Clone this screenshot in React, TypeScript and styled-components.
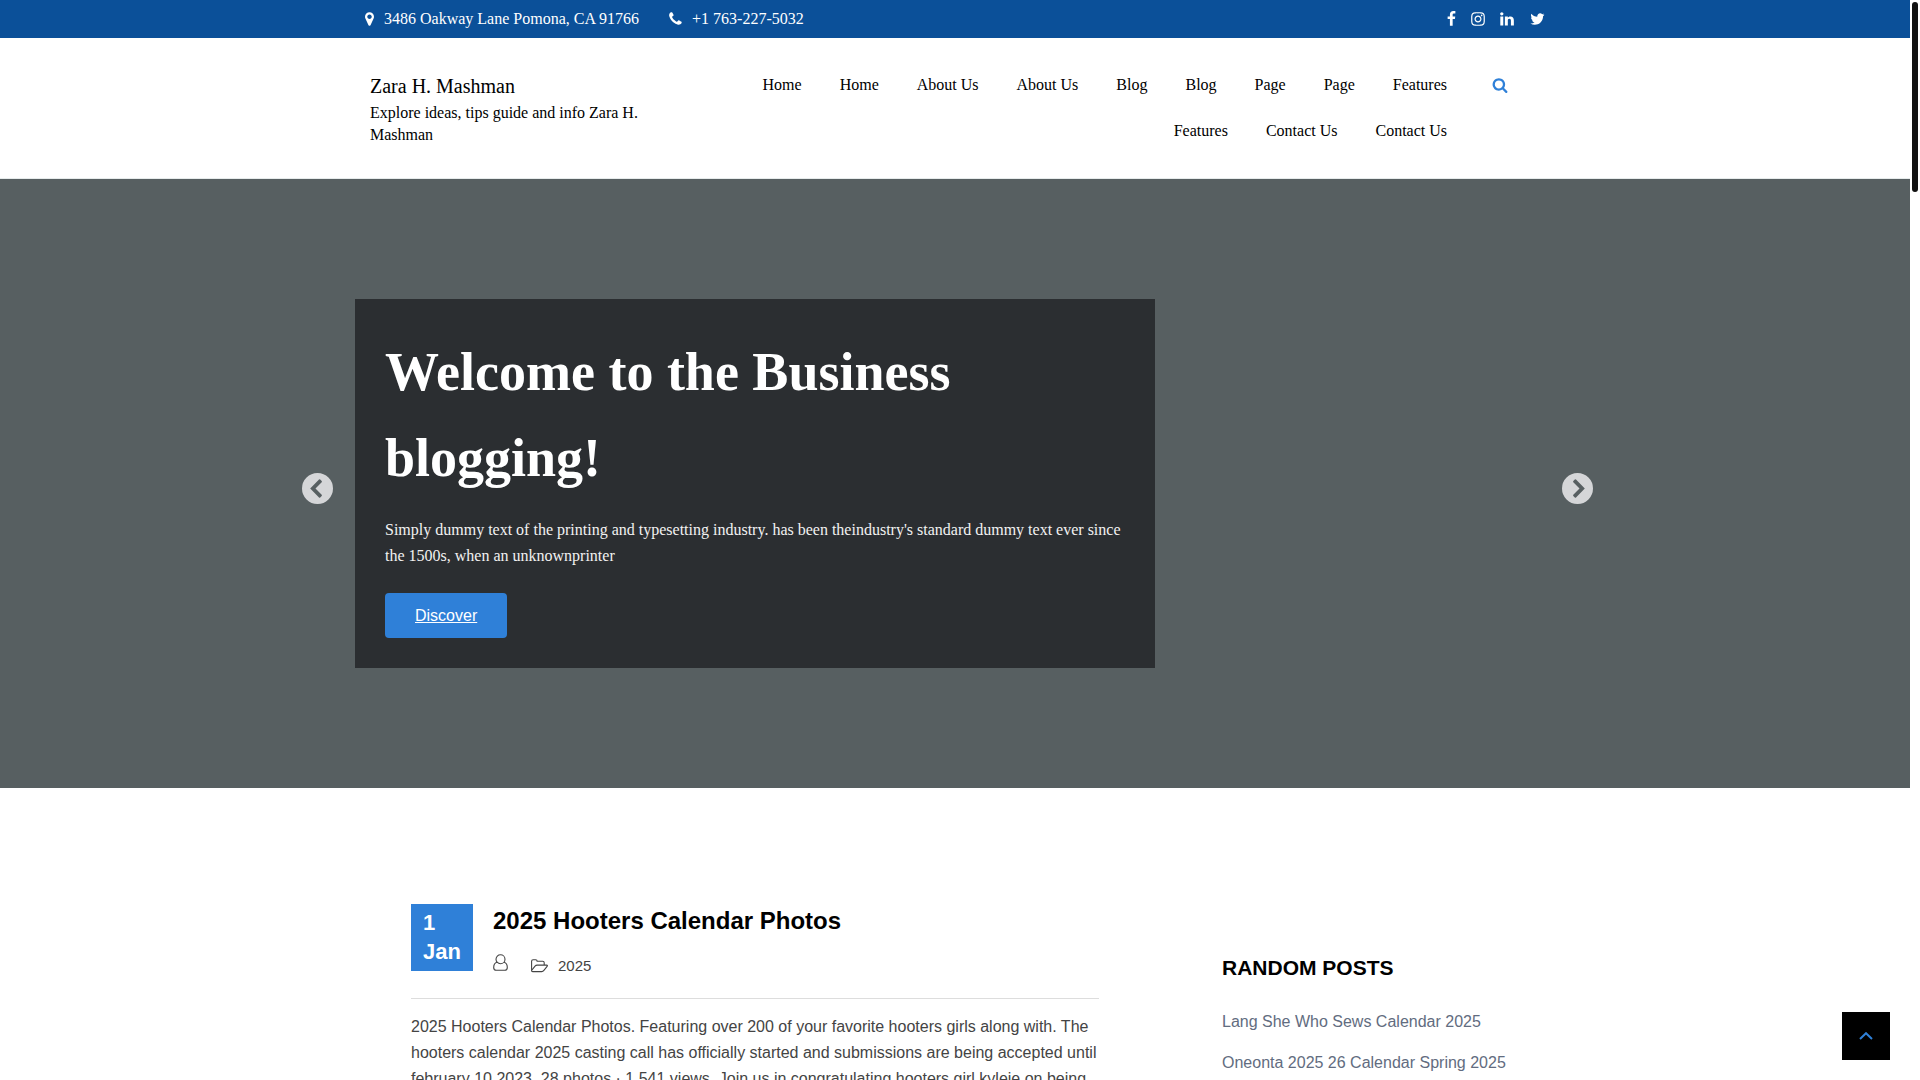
import React from "react";
import styled, { createGlobalStyle } from "styled-components";

const serif = `"Liberation Serif", "Times New Roman", serif`;
const sans = `"Liberation Sans", Arial, sans-serif`;
const blue = "#2f80d8";

const GlobalStyle = createGlobalStyle`
  *, *::before, *::after { box-sizing: border-box; }
  body { margin: 0; background: #fff; color: #444; font: 16px/26px ${sans}; }
  h1, h2, h3, p, ul { margin: 0; padding: 0; }
  ul { list-style: none; }
  a { color: inherit; text-decoration: none; }
  button { border: 0; padding: 0; background: none; cursor: pointer; }
  svg { display: block; flex: none; }
`;

const Page = styled.div`
  height: 100vh;
  overflow: hidden;
  padding-right: 10px;
`;

const Container = styled.div`
  position: relative;
  width: 100%;
  max-width: 1200px;
  margin: 0 auto;
`;

const TopBar = styled.div`
  background: #0b5099;
  color: #fff;
  font-family: ${serif};
`;

const TopBarInner = styled(Container)`
  display: flex;
  justify-content: space-between;
  align-items: center;
  height: 38px;
  padding: 0 10px;
`;

const Contacts = styled.div`
  display: flex;
  gap: 30px;
`;

const Contact = styled.span`
  display: flex;
  align-items: center;
  gap: 10px;
`;

const Socials = styled.div`
  display: flex;
  align-items: center;
  gap: 15px;
`;

const Header = styled.header`
  border-bottom: 1px solid #e6ebeb;
  color: #000;
  font-family: ${serif};
`;

const HeaderInner = styled(Container)`
  display: flex;
  align-items: flex-start;
  justify-content: space-between;
  padding: 24px 47px 24px 15px;
`;

const Brand = styled.div`
  width: 285px;
  padding-top: 12px;
  line-height: 22px;
`;

const BrandName = styled.a`
  display: block;
  margin-bottom: 4px;
  font-size: 20px;
  line-height: 24px;
`;

const Nav = styled.nav`
  flex: 1;
  max-width: 720px;
  margin: 0 45px 0 auto;
`;

const Menu = styled.ul`
  display: flex;
  flex-wrap: wrap;
  justify-content: flex-end;
  column-gap: 38px;
  line-height: 46px;
`;

const SearchButton = styled.button`
  display: flex;
  align-items: center;
  height: 46px;
  color: ${blue};
`;

const Hero = styled.section`
  padding: 120px 0;
  background: #575f61;
`;

const Slide = styled.div`
  max-width: 800px;
  padding: 30px;
  background: #2b2e31;
  color: #fff;
  font-family: ${serif};
`;

const SlideTitle = styled.h1`
  margin-bottom: 16px;
  font-size: 54px;
  line-height: 86px;
`;

const SlideText = styled.p`
  margin-bottom: 24px;
  color: #f2f2f2;
`;

const Discover = styled.a`
  display: inline-block;
  vertical-align: top;
  padding: 0 30px;
  border-radius: 4px;
  background: ${blue};
  font-family: ${sans};
  line-height: 45px;
  text-decoration: underline;
`;

const Arrow = styled.button<{ $side: "left" | "right" }>`
  position: absolute;
  top: 50%;
  margin-top: -11px;
  ${(p) => (p.$side === "left" ? "left: -53px;" : "right: -38px;")}
  color: #d5d6d8;
`;

const Content = styled(Container)`
  display: grid;
  grid-template-columns: 2fr 1fr;
  padding-top: 116px;
`;

const Post = styled.article`
  padding: 0 56px;
`;

const PostHead = styled.header`
  display: flex;
  align-items: flex-start;
  gap: 20px;
  padding-bottom: 20px;
  border-bottom: 1px solid #ddd;
`;

const PostDate = styled.time`
  width: 62px;
  padding: 4px 12px 5px;
  background: ${blue};
  color: #fff;
  font-size: 22px;
  font-weight: bold;
  line-height: 29px;
`;

const PostTitle = styled.h2`
  color: #000;
  font-size: 24px;
  line-height: 34px;
`;

const PostMeta = styled.div`
  display: flex;
  align-items: flex-start;
  gap: 23px;
  margin-top: 16px;
  font-size: 15px;
`;

const MetaLink = styled.a`
  display: flex;
  align-items: center;
  gap: 10px;
  line-height: 24px;
`;

const PostBody = styled.p`
  padding-top: 15px;
`;

const Sidebar = styled.aside`
  padding: 51px 0 0 67px;
`;

const SidebarTitle = styled.h3`
  margin-bottom: 28px;
  color: #000;
  font-size: 21px;
  line-height: 26px;
`;

const PostList = styled.ul`
  display: grid;
  gap: 15px;
  color: #626c80;
`;

const ToTop = styled.button`
  position: fixed;
  right: 30px;
  bottom: 20px;
  display: grid;
  place-items: center;
  width: 48px;
  height: 48px;
  background: #000;
  color: ${blue};
`;

const ScrollThumb = styled.div`
  position: fixed;
  top: 2px;
  right: 2px;
  width: 6px;
  height: 190px;
  border-radius: 3px;
  background: #111;
`;

type GlyphProps = { d: string; left?: number; units?: number; width: number };

/* Glyphs share a 1792-unit em, drawn at 16px and trimmed to their own width. */
const Glyph = ({ d, left = 0, units = 1792, width }: GlyphProps) => (
  <svg width={width} height={16} viewBox={`${left} 0 ${units} 1792`} fill="currentColor" aria-hidden="true">
    <path d={d} />
  </svg>
);

const icons = {
  marker:
    "M1152 640q0-106-75-181t-181-75-181 75-75 181 75 181 181 75 181-75 75-181zm256 0q0 109-33 179l-364 774q-16 33-47.5 52t-67.5 19-67.5-19-46.5-52l-365-774q-33-70-33-179 0-212 150-362t362-150 362 150 150 362z",
  phone:
    "M1600 1240q0 27-10 70.5t-21 68.5q-21 50-122 106-94 51-186 51-27 0-53-3.5t-57.5-12.5-47-14.5-55.5-20.5-49-18q-98-35-175-83-127-79-264-216t-216-264q-48-77-83-175-3-9-18-49t-20.5-55.5-14.5-47-12.5-57.5-3.5-53q0-92 51-186 56-101 106-122 25-11 68.5-21t70.5-10q14 0 21 3 18 6 53 76 11 19 30 54t35 63.5 31 53.5q3 4 17.5 25t21.5 35.5 7 28.5q0 20-28.5 50t-62 55-62 53-28.5 46q0 9 5 22.5t8.5 20.5 14 24 11.5 19q76 137 174 235t235 174q2 1 19 11.5t24 14 20.5 8.5 22.5 5q18 0 46-28.5t53-62 55-62 50-28.5q14 0 28.5 7t35.5 21.5 25 17.5q25 15 53.5 31t63.5 35 54 30q70 35 76 53 3 7 3 21z",
  facebook:
    "M1343 12v264h-157q-86 0-116 36t-30 108v189h293l-39 296h-254v759h-306v-759h-255v-296h255v-218q0-186 104-288.5t277-102.5q147 0 228 12z",
  instagram:
    "M1152 896q0-106-75-181t-181-75-181 75-75 181 75 181 181 75 181-75 75-181zm138 0q0 164-115 279t-279 115-279-115-115-279 115-279 279-115 279 115 115 279zm108-410q0 38-27 65t-65 27-65-27-27-65 27-65 65-27 65 27 27 65zm-502-220q-7 0-76.5-.5t-105.5 0-96.5 3-103 10-71.5 18.5q-50 20-88 58t-58 88q-11 29-18.5 71.5t-10 103-3 96.5 0 105.5.5 76.5-.5 76.5 0 105.5 3 96.5 10 103 18.5 71.5q20 50 58 88t88 58q29 11 71.5 18.5t103 10 96.5 3 105.5 0 76.5-.5 76.5.5 105.5 0 96.5-3 103-10 71.5-18.5q50-20 88-58t58-88q11-29 18.5-71.5t10-103 3-96.5 0-105.5-.5-76.5.5-76.5 0-105.5-3-96.5-10-103-18.5-71.5q-20-50-58-88t-88-58q-29-11-71.5-18.5t-103-10-96.5-3-105.5 0-76.5.5zm768 630q0 229-5 317-10 208-124 322t-322 124q-88 5-317 5t-317-5q-208-10-322-124t-124-322q-5-88-5-317t5-317q10-208 124-322t322-124q88-5 317-5t317 5q208 10 322 124t124 322q5 88 5 317z",
  linkedin:
    "M477 625v991h-330v-991h330zm21-306q1 73-50.5 122t-135.5 49h-2q-82 0-132-49t-50-122q0-74 51.5-122.5t134.5-48.5 133 48.5 51 122.5zm1166 729v568h-329v-530q0-105-40.5-164.5t-126.5-59.5q-63 0-105.5 34.5t-63.5 85.5q-11 30-11 81v553h-329q2-399 2-647t-1-296l-1-48h329v144h-2q20-32 41-56t56.5-52 87-43.5 114.5-15.5q171 0 275 113.5t104 332.5z",
  twitter:
    "M1684 408q-67 98-162 167 1 14 1 42 0 130-38 259.5t-115.5 248.5-184.5 210.5-258 146-323 54.5q-271 0-496-145 35 4 78 4 225 0 401-138-105-2-188-64.5t-114-159.5q33 5 61 5 43 0 85-11-112-23-185.5-111.5t-73.5-205.5v-4q68 38 146 41-66-44-105-115t-39-154q0-88 44-163 121 149 294.5 238.5t371.5 99.5q-8-38-8-74 0-134 94.5-228.5t228.5-94.5q140 0 236 102 109-21 205-78-37 115-142 178 93-10 186-50z",
  search:
    "M1216 832q0-185-131.5-316.5t-316.5-131.5-316.5 131.5-131.5 316.5 131.5 316.5 316.5 131.5 316.5-131.5 131.5-316.5zm512 832q0 52-38 90t-90 38q-54 0-90-38l-343-342q-179 124-399 124-143 0-273.5-55.5t-225-150-150-225-55.5-273.5 55.5-273.5 150-225 225-150 273.5-55.5 273.5 55.5 225 150 150 225 55.5 273.5q0 220-124 399l343 343q37 37 37 90z",
};

const CircleArrow = ({ flip = false }: { flip?: boolean }) => (
  <svg width="31" height="31" viewBox="0 0 31 31" fill="currentColor" aria-hidden="true">
    <path
      transform={flip ? "matrix(-1 0 0 1 31 0)" : undefined}
      fillRule="evenodd"
      d="M15.5 0a15.5 15.5 0 1 0 0 31a15.5 15.5 0 1 0 0-31zM8.2 15.5L17 6.6Q17.6 6 18.2 6.6L19.7 8.1Q20.2 8.7 19.7 9.3L13.5 15.5L19.7 21.7Q20.2 22.3 19.7 22.9L18.2 24.4Q17.6 25 17 24.4Z"
    />
  </svg>
);

const UserIcon = () => (
  <svg width="15" height="17" viewBox="0 0 15 17" fill="none" stroke="currentColor" strokeWidth="1.1" aria-hidden="true">
    <circle cx="7.5" cy="5.3" r="4.5" />
    <path d="M4 8.2C1.6 8.8 .7 11 .7 13.4C.7 15 1.7 16.2 3.3 16.2H11.7C13.3 16.2 14.3 15 14.3 13.4C14.3 11 13.4 8.8 11 8.2" />
  </svg>
);

const FolderIcon = () => (
  <svg width="17" height="14" viewBox="0 0 17 14" fill="none" stroke="currentColor" strokeWidth="1.1" strokeLinejoin="round" aria-hidden="true">
    <path d="M.6 11.5V2.2Q.6 .7 2.1 .7H4.6Q6.1 .7 6.1 2.2H11.7Q13.2 2.2 13.2 3.7V6.1M.6 11.5L4 7.2Q4.9 6.1 6.2 6.1H15.6Q17 6.1 16.1 7.3L12.9 11.4Q12 12.6 10.7 12.6H1.7Q.6 12.6 .6 11.5Z" />
  </svg>
);

const menu = [
  "Home", "Home", "About Us", "About Us", "Blog", "Blog",
  "Page", "Page", "Features", "Features", "Contact Us", "Contact Us",
];

const socials = [
  { name: "Facebook", d: icons.facebook, left: 407, units: 1008, width: 9 },
  { name: "Instagram", d: icons.instagram, left: 112, units: 1568, width: 14 },
  { name: "LinkedIn", d: icons.linkedin, left: 112, units: 1680, width: 15 },
  { name: "Twitter", d: icons.twitter, left: 64, units: 1680, width: 15 },
];

const randomPosts = [
  "Lang She Who Sews Calendar 2025",
  "Oneonta 2025 26 Calendar Spring 2025",
];

export default function App() {
  return (
    <Page>
      <GlobalStyle />
      <TopBar>
        <TopBarInner>
          <Contacts>
            <Contact>
              <Glyph d={icons.marker} left={384} units={1024} width={9} />
              3486 Oakway Lane Pomona, CA 91766
            </Contact>
            <Contact>
              <Glyph d={icons.phone} left={176} units={1456} width={13} />
              +1 763-227-5032
            </Contact>
          </Contacts>
          <Socials>
            {socials.map(({ name, ...glyph }) => (
              <a key={name} href="#" aria-label={name}>
                <Glyph {...glyph} />
              </a>
            ))}
          </Socials>
        </TopBarInner>
      </TopBar>

      <Header>
        <HeaderInner>
          <Brand>
            <BrandName href="#">Zara H. Mashman</BrandName>
            <p>Explore ideas, tips guide and info Zara H. Mashman</p>
          </Brand>
          <Nav>
            <Menu>
              {menu.map((label, i) => (
                <li key={i}>
                  <a href="#">{label}</a>
                </li>
              ))}
            </Menu>
          </Nav>
          <SearchButton aria-label="Search">
            <Glyph d={icons.search} width={16} />
          </SearchButton>
        </HeaderInner>
      </Header>

      <Hero>
        <Container>
          <Arrow $side="left" aria-label="Previous">
            <CircleArrow />
          </Arrow>
          <Slide>
            <SlideTitle>Welcome to the Business blogging!</SlideTitle>
            <SlideText>
              Simply dummy text of the printing and typesetting industry. has been theindustry's standard
              dummy text ever since the 1500s, when an unknownprinter
            </SlideText>
            <Discover href="#">Discover</Discover>
          </Slide>
          <Arrow $side="right" aria-label="Next">
            <CircleArrow flip />
          </Arrow>
        </Container>
      </Hero>

      <Content as="main">
        <Post>
          <PostHead>
            <PostDate>1 Jan</PostDate>
            <div>
              <PostTitle>
                <a href="#">2025 Hooters Calendar Photos</a>
              </PostTitle>
              <PostMeta>
                <a href="#" aria-label="Author">
                  <UserIcon />
                </a>
                <MetaLink href="#">
                  <FolderIcon />
                  2025
                </MetaLink>
              </PostMeta>
            </div>
          </PostHead>
          <PostBody>
            2025 Hooters Calendar Photos. Featuring over 200 of your favorite hooters girls along with. The
            hooters calendar 2025 casting call has officially started and submissions are being accepted
            until february 10 2023. 28 photos · 1,541 views. Join us in congratulating hooters girl kyleie on
            being
          </PostBody>
        </Post>
        <Sidebar>
          <SidebarTitle>RANDOM POSTS</SidebarTitle>
          <PostList>
            {randomPosts.map((title) => (
              <li key={title}>
                <a href="#">{title}</a>
              </li>
            ))}
          </PostList>
        </Sidebar>
      </Content>

      <ToTop aria-label="Back to top">
        <svg width="14" height="8" viewBox="0 0 14 8" fill="none" stroke="currentColor" strokeWidth="2" aria-hidden="true">
          <path d="M1 7L7 1.2L13 7" />
        </svg>
      </ToTop>
      <ScrollThumb />
    </Page>
  );
}
